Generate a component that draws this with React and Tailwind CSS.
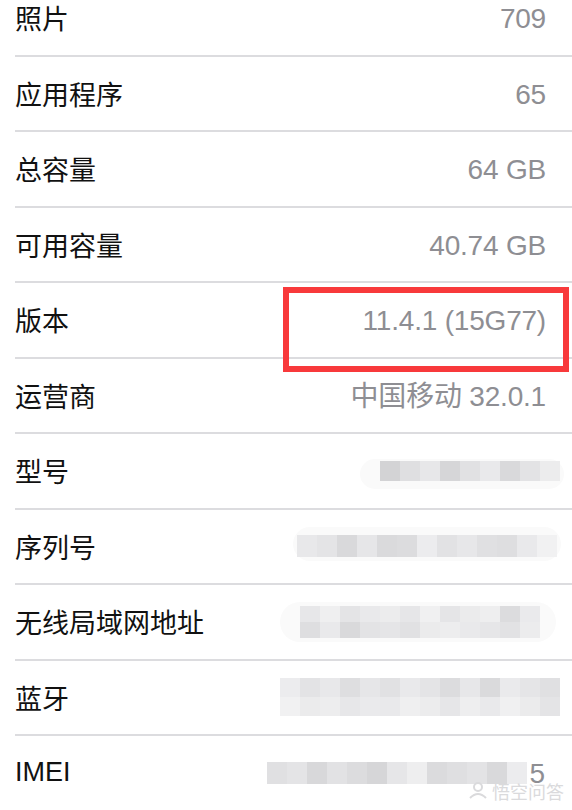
import React from 'react';

const cjk = { fontFamily: '"Noto Sans CJK SC", "Noto Sans", sans-serif' };
const num = { fontFamily: '"Liberation Sans", "Noto Sans CJK SC", sans-serif' };

// mosaic blocks used to hide private values
const Mosaic = ({ cells, rows = 1, cellW = 20, cellH = 20, halo }) => (
  <div className="relative">
    {halo && <div className={`absolute rounded-full bg-[#fafafa] ${halo}`} />}
    <div className="relative flex flex-col">
      {Array.from({ length: rows }).map((_, r) => (
        <div key={r} className="flex">
          {cells[r].map((c, i) => (
            <div key={i} style={{ width: cellW, height: cellH, background: c }} />
          ))}
        </div>
      ))}
    </div>
  </div>
);

const rows = [
  { label: '照片', value: '709' },
  { label: '应用程序', value: '65' },
  { label: '总容量', value: '64 GB' },
  { label: '可用容量', value: '40.74 GB' },
  { label: '版本', value: '11.4.1 (15G77)', boxed: true },
  { label: '运营商', value: '中国移动 32.0.1' },
  { label: '型号', mosaic: 'model' },
  { label: '序列号', mosaic: 'serial' },
  { label: '无线局域网地址', mosaic: 'wifi' },
  { label: '蓝牙', mosaic: 'bt' },
  { label: 'IMEI', mosaic: 'imei' },
];

const MosaicValue = ({ kind }) => {
  if (kind === 'model')
    return (
      <div className="mr-[12px]">
        <Mosaic
          cells={[['#d3d3d5', '#dfdfe1', '#e7e7e9', '#d6d6d8', '#e1e1e3', '#e9e9eb', '#d9d9db', '#e3e3e5', '#ececed']]}
          halo="-left-[20px] -right-[4px] -top-[2px] -bottom-[8px]"
        />
      </div>
    );
  if (kind === 'serial')
    return (
      <div className="mr-[15px]">
        <Mosaic
          cellH={22}
          cells={[['#e8e8ea', '#e4e4e6', '#d9d9db', '#e6e6e8', '#dadadc', '#dcdcde', '#ececee', '#e2e2e4', '#e7e7e9', '#e0e0e2', '#dedee0', '#e9e9eb', '#f1f1f2']]}
          halo="-left-[4px] -right-[4px] -top-[8px] -bottom-[4px]"
        />
      </div>
    );
  if (kind === 'wifi')
    return (
      <div className="mr-[32px]">
        <Mosaic
          rows={2}
          cellH={16}
          cells={[
            ['#e7e7e9', '#efeff0', '#e4e4e6', '#e9e9eb', '#ececed', '#e6e6e8', '#f0f0f1', '#e5e5e7', '#ebebec', '#eeeeef', '#dcdcde', '#eaeaec'],
            ['#dedee0', '#e9e9eb', '#d9d9db', '#e3e3e5', '#e5e5e7', '#e1e1e3', '#ebebec', '#ededee', '#e9e9eb', '#e6e6e8', '#e2e2e4', '#ececed'],
          ]}
          halo="-left-[20px] -right-[16px] -top-[4px] -bottom-[4px]"
        />
      </div>
    );
  if (kind === 'bt')
    return (
      <div className="mr-[12px]">
        <Mosaic
          rows={2}
          cellH={19}
          cells={[
            ['#ececee', '#e3e3e5', '#e8e8ea', '#dedee0', '#e6e6e8', '#e1e1e3', '#e9e9eb', '#e4e4e6', '#dcdcde', '#e7e7e9', '#dadadc', '#eaeaec', '#e5e5e7', '#e0e0e2'],
            ['#f1f1f2', '#ebebec', '#ededee', '#e7e7e9', '#eaeaec', '#e9e9eb', '#efeff0', '#ececed', '#e6e6e8', '#eeeeef', '#e9e9eb', '#f0f0f1', '#ebebec', '#e4e4e6'],
          ]}
        />
      </div>
    );
  return (
    <div className="flex items-center mr-[27px]">
      <Mosaic
        cellH={22}
        cells={[['#e0e0e2', '#e4e4e6', '#d8d8da', '#e2e2e4', '#dcdcde', '#d6d6d8', '#e6e6e8', '#eeeeef', '#dbdbdd', '#dfdfe1', '#e3e3e5', '#d9d9db', '#ececee']]}
      />
      <span style={num} className="ml-[2px] pt-[3px] text-[28px] leading-none text-[#8e8e93]">5</span>
    </div>
  );
};

export default function App() {
  return (
    <div className="w-[572px] h-[810px] overflow-hidden bg-white">
      <div className="-mt-[19px]">
        {rows.map((r) => (
          <div key={r.label} className="relative pl-[15px]">
            <div className="flex items-center h-[75.5px] border-b-2 border-[#dcdcdf]">
              <span style={r.label === 'IMEI' ? num : cjk} className="text-[27px] leading-none text-[#111111]">
                {r.label}
              </span>
              <div className="ml-auto flex items-center">
                {r.value ? (
                  <span style={num} className="mr-[26px] pt-[3px] text-[28px] leading-none text-[#8e8e93] tracking-[-0.2px]">
                    {r.value}
                  </span>
                ) : (
                  <MosaicValue kind={r.mosaic} />
                )}
              </div>
            </div>
            {r.boxed && (
              <div className="absolute left-[283px] top-[4px] w-[286px] h-[85px] border-[6px] border-[#f8393b]" />
            )}
            {r.mosaic === 'imei' && (
              <div className="absolute right-[8px] top-[46px] flex items-center gap-[4px] text-[#dadadc]">
                <svg width="20" height="18" viewBox="0 0 20 18">
                  <circle cx="10" cy="5" r="4" fill="none" stroke="#dadadc" strokeWidth="2" />
                  <path d="M2 16 Q10 8 18 16" fill="none" stroke="#dadadc" strokeWidth="2" />
                </svg>
                <span style={cjk} className="text-[18px] leading-none">悟空问答</span>
              </div>
            )}
          </div>
        ))}
      </div>
    </div>
  );
}
